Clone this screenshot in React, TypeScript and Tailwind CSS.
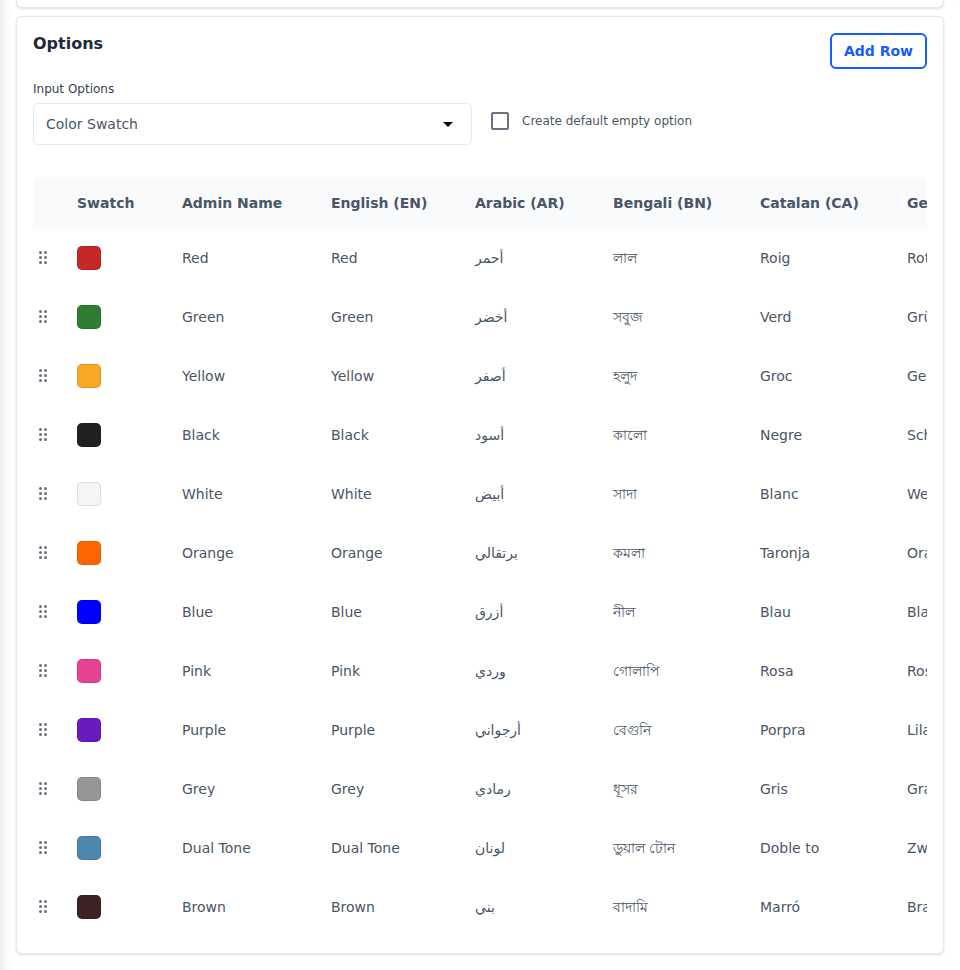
import React from 'react';

interface OptionRow {
  admin: string;
  color: string;
  ar: string;
  bn: string;
  ca: string;
  de: string;
}

const rows: OptionRow[] = [
  { admin: 'Red', color: '#c62828', ar: 'أحمر', bn: 'লাল', ca: 'Roig', de: 'Rot' },
  { admin: 'Green', color: '#2e7d32', ar: 'أخضر', bn: 'সবুজ', ca: 'Verd', de: 'Grün' },
  { admin: 'Yellow', color: '#f9a825', ar: 'أصفر', bn: 'হলুদ', ca: 'Groc', de: 'Gelb' },
  { admin: 'Black', color: '#212121', ar: 'أسود', bn: 'কালো', ca: 'Negre', de: 'Schwarz' },
  { admin: 'White', color: '#f5f5f5', ar: 'أبيض', bn: 'সাদা', ca: 'Blanc', de: 'Weiß' },
  { admin: 'Orange', color: '#ff6600', ar: 'برتقالي', bn: 'কমলা', ca: 'Taronja', de: 'Orange' },
  { admin: 'Blue', color: '#0000ff', ar: 'أزرق', bn: 'নীল', ca: 'Blau', de: 'Blau' },
  { admin: 'Pink', color: '#e84393', ar: 'وردي', bn: 'গোলাপি', ca: 'Rosa', de: 'Rosa' },
  { admin: 'Purple', color: '#6a1bc0', ar: 'أرجواني', bn: 'বেগুনি', ca: 'Porpra', de: 'Lila' },
  { admin: 'Grey', color: '#969696', ar: 'رمادي', bn: 'ধূসর', ca: 'Gris', de: 'Grau' },
  { admin: 'Dual Tone', color: '#4f86b0', ar: 'لونان', bn: 'ডুয়াল টোন', ca: 'Doble to', de: 'Zweifarbig' },
  { admin: 'Brown', color: '#3e2323', ar: 'بني', bn: 'বাদামি', ca: 'Marró', de: 'Braun' },
];

// 2x3 dot grip used for row reordering
const DragHandle = () => (
  <svg width="8" height="13" viewBox="0 0 8 13" className="block text-gray-500" fill="currentColor">
    <circle cx="1.5" cy="1.5" r="1.5" />
    <circle cx="6.5" cy="1.5" r="1.5" />
    <circle cx="1.5" cy="6.5" r="1.5" />
    <circle cx="6.5" cy="6.5" r="1.5" />
    <circle cx="1.5" cy="11.5" r="1.5" />
    <circle cx="6.5" cy="11.5" r="1.5" />
  </svg>
);

const headers = ['Swatch', 'Admin Name', 'English (EN)', 'Arabic (AR)', 'Bengali (BN)', 'Catalan (CA)', 'German (DE)'];

export default function App() {
  return (
    <div
      className="min-h-[970px] bg-white px-4 flex flex-col gap-2 shadow-[inset_10px_0_8px_-6px_rgba(0,0,0,0.08)] text-gray-600"
      style={{ fontFamily: '"DejaVu Sans", "Noto Sans", sans-serif' }}
    >
      {/* bottom edge of the previous card */}
      <div className="h-2 bg-white border-x border-b border-gray-200 rounded-b-md shadow-sm" />

      <div className="bg-white border border-gray-200 rounded-md shadow-sm p-4">
        <div className="flex items-start justify-between">
          <h2 className="pt-px text-base leading-5 font-bold text-gray-800">Options</h2>
          <button className="h-9 px-[12px] rounded-md border-2 border-blue-600 text-blue-600 text-sm font-bold">
            Add Row
          </button>
        </div>

        <div className="grid grid-cols-2 gap-4 mt-[12px]">
          <div>
            <label className="block text-xs leading-4 text-gray-700 mb-[6px]">Input Options</label>
            <div className="h-[42px] border border-gray-200 rounded-md flex items-center justify-between pl-3 pr-[18px]">
              <span className="text-sm text-gray-600">Color Swatch</span>
              <svg width="10" height="5" viewBox="0 0 10 5" className="text-black" fill="currentColor">
                <path d="M0 0h10L5 5z" />
              </svg>
            </div>
          </div>
          <div className="pt-[31px] flex items-start">
            <div className="flex items-center gap-[13px] ml-[3px]">
              <span className="w-[18px] h-[18px] border-2 border-gray-500 rounded-[2px]" />
              <span className="text-xs leading-4 text-gray-600">Create default empty option</span>
            </div>
          </div>
        </div>

        <div className="mt-8 overflow-hidden">
          <table className="table-fixed border-collapse w-[1005px] text-sm">
            <colgroup>
              <col className="w-[28px]" />
              <col className="w-[105px]" />
              <col className="w-[149px]" />
              <col className="w-[144px]" />
              <col className="w-[138px]" />
              <col className="w-[147px]" />
              <col className="w-[147px]" />
              <col className="w-[147px]" />
            </colgroup>
            <thead>
              <tr className="bg-slate-50 h-[52px]">
                <th />
                {headers.map((h) => (
                  <th key={h} className="px-4 text-left font-bold text-gray-600 whitespace-nowrap overflow-hidden">
                    {h}
                  </th>
                ))}
              </tr>
            </thead>
            <tbody>
              {rows.map((r) => (
                <tr key={r.admin} className="h-[59px]">
                  <td className="pl-[6px] pb-[2px]">
                    <DragHandle />
                  </td>
                  <td className="px-4 pb-[2px]">
                    <div
                      className="w-6 h-6 rounded-[5px] border border-black/10"
                      style={{ backgroundColor: r.color }}
                    />
                  </td>
                  <td className="px-4 pb-[2px] whitespace-nowrap overflow-hidden">{r.admin}</td>
                  <td className="px-4 pb-[2px] whitespace-nowrap overflow-hidden">{r.admin}</td>
                  <td className="px-4 pb-[2px] whitespace-nowrap overflow-hidden">{r.ar}</td>
                  <td className="px-4 pb-[2px] whitespace-nowrap overflow-hidden">{r.bn}</td>
                  <td className="px-4 pb-[2px] whitespace-nowrap overflow-hidden">{r.ca}</td>
                  <td className="px-4 pb-[2px] whitespace-nowrap overflow-hidden">{r.de}</td>
                </tr>
              ))}
            </tbody>
          </table>
        </div>
      </div>
    </div>
  );
}
